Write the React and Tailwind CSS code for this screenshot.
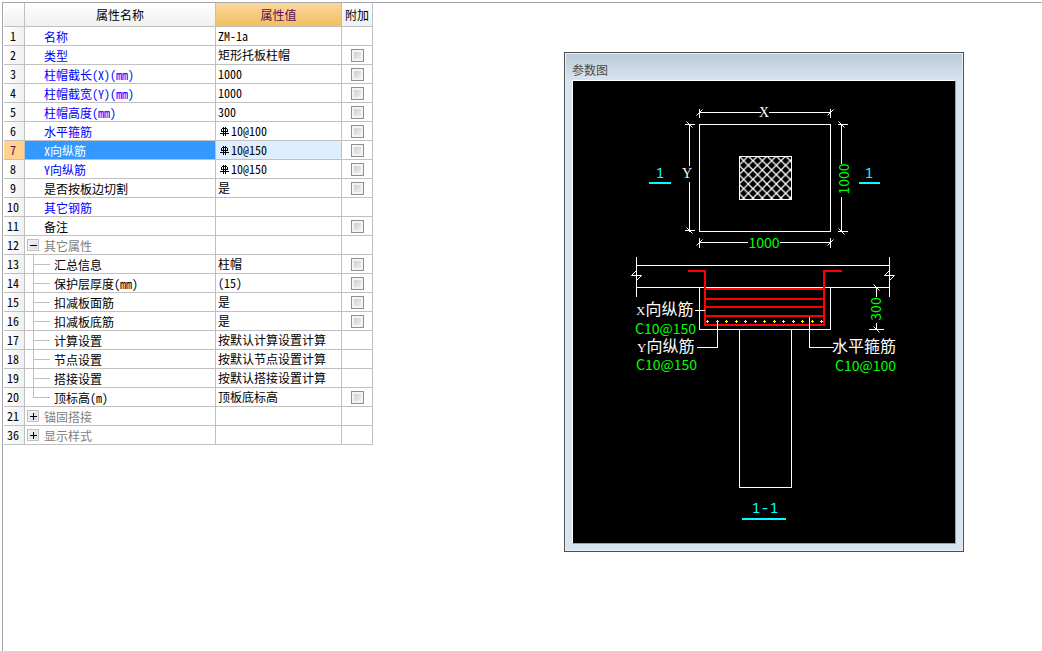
const ROWS = [
  { no: 1, name: "名称", value: "ZM-1a", tone: "key" },
  { no: 2, name: "类型", value: "矩形托板柱帽", tone: "key", check: true },
  { no: 3, name: "柱帽截长(X)(mm)", value: "1000", tone: "key", check: true },
  { no: 4, name: "柱帽截宽(Y)(mm)", value: "1000", tone: "key", check: true },
  { no: 5, name: "柱帽高度(mm)", value: "300", tone: "key", check: true },
  { no: 6, name: "水平箍筋", value: "10@100", rebar: true, tone: "key", check: true },
  { no: 7, name: "X向纵筋", value: "10@150", rebar: true, tone: "key", check: true, selected: true },
  { no: 8, name: "Y向纵筋", value: "10@150", rebar: true, tone: "key", check: true },
  { no: 9, name: "是否按板边切割", value: "是", check: true },
  { no: 10, name: "其它钢筋", value: "", tone: "key" },
  { no: 11, name: "备注", value: "", check: true },
  { no: 12, name: "其它属性", value: "", tone: "group", open: true },
  { no: 13, name: "汇总信息", value: "柱帽", child: true, check: true },
  { no: 14, name: "保护层厚度(mm)", value: "(15)", child: true, check: true },
  { no: 15, name: "扣减板面筋", value: "是", child: true, check: true },
  { no: 16, name: "扣减板底筋", value: "是", child: true, check: true },
  { no: 17, name: "计算设置", value: "按默认计算设置计算", child: true },
  { no: 18, name: "节点设置", value: "按默认节点设置计算", child: true },
  { no: 19, name: "搭接设置", value: "按默认搭接设置计算", child: true },
  { no: 20, name: "顶标高(m)", value: "顶板底标高", child: true, last: true, check: true },
  { no: 21, name: "锚固搭接", value: "", tone: "group", open: false },
  { no: 36, name: "显示样式", value: "", tone: "group", open: false },
];

const CELL = "border-r border-b border-[#c0c0c0] p-0 font-normal";

function nameColor(row) {
  if (row.selected) return "text-white";
  if (row.tone === "key") return "text-[#0000ff]";
  if (row.tone === "group") return "text-[#808080]";
  return "text-black";
}

function RebarSign() {
  return (
    <svg viewBox="0 0 9 9" className="mr-[2px] ml-[2px] size-[9px] shrink-0" fill="#000" shapeRendering="crispEdges">
      <path d="M2 1h5v1H2zM1 2h1v3H1zM7 2h1v3H7zM2 4h5v1H2zM0 6h9v1H0zM3 0h1v9H3zM5 0h1v9H5z" />
    </svg>
  );
}

function Expander({ open, label }) {
  return (
    <button
      type="button"
      aria-label={label}
      aria-expanded={open}
      className="mr-[5px] ml-[2px] size-3 border border-[#c0c0c0] bg-linear-to-br from-[#f4f4f4] to-[#d2d6de] shadow-[inset_0_0_0_1px_#f0f0f0]"
    >
      <svg viewBox="0 0 10 10" className="block size-[10px]" fill="#000" shapeRendering="crispEdges">
        <path d={open ? "M2 5h7v1H2z" : "M2 5h7v1H2zM5 2h1v7H5z"} />
      </svg>
    </button>
  );
}

function Branch({ last }) {
  return (
    <span className="mr-[4px] ml-2 flex h-[19px] w-[17px] flex-col">
      <span className="h-[10px] border-b border-l border-[#c0c0c0]" />
      {!last && <span className="h-[9px] border-l border-[#c0c0c0]" />}
    </span>
  );
}

function PropertyRow({ row }) {
  const isGroup = row.tone === "group";
  const nameId = `prop-${row.no}`;

  return (
    <tr>
      <th
        scope="row"
        className={`${CELL} text-center ${
          row.selected ? "bg-[#ffd38c] text-[#5a0a5a]" : "bg-linear-to-r from-white to-[#f0f0f0] text-black"
        }`}
      >
        <div className="h-[18px] pr-[2px] leading-[17px]">{row.no}</div>
      </th>
      <td className={`${CELL} ${row.selected ? "bg-[#3399ff]" : ""}`}>
        <div className={`flex h-[18px] items-center ${nameColor(row)}`}>
          {isGroup && <Expander open={row.open} label={row.name} />}
          {row.child && <Branch last={row.last} />}
          <span id={nameId} className={isGroup || row.child ? "pt-[2px]" : "pt-[2px] pl-[19px]"}>
            {row.name}
          </span>
        </div>
      </td>
      <td className={`${CELL} ${row.selected ? "bg-[#dfeeff]" : ""}`}>
        <div className="flex h-[18px] items-center pl-[2px]">
          {row.rebar && <RebarSign />}
          <span>{row.value}</span>
        </div>
      </td>
      <td className={CELL}>
        {row.check && (
          <input
            type="checkbox"
            aria-labelledby={nameId}
            className="mx-auto block size-[13px] appearance-none border border-[#8e8f8f] bg-linear-to-br from-[#c2c8d2] to-[#f6f6f6] shadow-[inset_0_0_0_2px_#f4f4f4] checked:from-[#3399ff]"
          />
        )}
      </td>
    </tr>
  );
}

function PropertyTable() {
  return (
    <table className="w-[369px] shrink-0 table-fixed border-separate border-spacing-0 self-start text-[12px] leading-[18px]">
      <colgroup>
        <col className="w-[21px]" />
        <col className="w-[191px]" />
        <col className="w-[126px]" />
        <col className="w-[31px]" />
      </colgroup>
      <thead>
        <tr className="h-6">
          <td className={`${CELL} bg-linear-to-b from-white to-[#f0f0f0]`} />
          <th className={`${CELL} bg-linear-to-b from-white to-[#f0f0f0]`}>属性名称</th>
          <th className={`${CELL} bg-linear-to-b from-[#fad79c] to-[#f2bf5d] text-[#5a0a5a]`}>属性值</th>
          <th className={`${CELL} bg-linear-to-b from-white to-[#f0f0f0]`}>附加</th>
        </tr>
      </thead>
      <tbody>
        {ROWS.map((row) => (
          <PropertyRow key={row.no} row={row} />
        ))}
      </tbody>
    </table>
  );
}

const DOTS = Array.from({ length: 13 }, (_, i) => Math.round(134 + i * 9.5));

function SectionDrawing() {
  return (
    <svg viewBox="0 0 382 462" className="block w-full bg-black">
      <defs>
        <pattern id="hatch" x="166" y="75" width="9.33" height="9.33" patternUnits="userSpaceOnUse">
          <path d="M0 0l9.33 9.33M9.33 0L0 9.33" stroke="#fff" strokeWidth="1.3" />
        </pattern>
      </defs>

      {/* Plan view */}
      <g fill="none" stroke="#fff" shapeRendering="crispEdges" transform="translate(0.5 0.5)">
        <rect x="126" y="43" width="131" height="107" />
        <path d="M126 31H187M195 31H257M126 27v9M257 27v9" />
        <path d="M126 161H174M206 161H257M126 156v10M257 156v10" />
        <path d="M116 43V84M116 100V150M111 43h10M111 149h10" />
        <path d="M268 43V82M268 115V150M264 43h10M264 150h10" />
      </g>
      <rect x="166.5" y="75.5" width="52" height="43" fill="url(#hatch)" stroke="#fff" />
      <g fill="none" stroke="#fff" transform="translate(0.5 0.5)">
        <path d="M123 34l6-6M254 34l6-6M123 164l6-6M254 164l6-6" />
        <path d="M113 40l6 6M113 146l6 6M265 40l6 6M265 147l6 6" />
      </g>

      {/* Slab, cap and column */}
      <g fill="none" stroke="#fff" shapeRendering="crispEdges" transform="translate(0.5 0.5)">
        <path d="M63 184H316M63 206H316M63 175V215M316 175V215" />
        <path d="M126 206V248H257V206" />
        <path d="M166 248V406H218V248" />
        <path d="M303 206V215M303 241V248M295 248h15" />
      </g>
      <g fill="none" stroke="#fff" transform="translate(0.5 0.5)">
        <path d="M63 189l-5 5h10l-5 5M316 189l-5 5h10l-5 5" />
        <path d="M300 203l6 6M300 245l6 6" />
      </g>

      {/* Reinforcement */}
      <g fill="none" stroke="#f00" strokeWidth="2" shapeRendering="crispEdges">
        <path d="M115 190H132V244H251V190H269" />
        <path d="M132 208H251M132 218H251M132 226H251M132 235H251" />
      </g>
      <g fill="#ff0" shapeRendering="crispEdges">
        {DOTS.map((x) => (
          <path key={x} d={`M${x - 1} 240h3v1h-3zM${x} 239h1v3h-1z`} />
        ))}
      </g>
      <g fill="none" stroke="#fff" shapeRendering="crispEdges" transform="translate(0.5 0.5)">
        <path d="M121 229H131M123 266H144V240M236 235V266H260" />
      </g>

      {/* Section marks */}
      <g fill="#0ff">
        <rect x="76" y="101" width="22" height="2" />
        <rect x="286" y="101" width="21" height="2" />
        <rect x="169" y="437" width="44" height="2" />
      </g>
      <g fill="#0ff" textAnchor="middle" className="font-['Noto_Sans_Mono','Noto_Sans_CJK_SC',monospace] text-[15px]">
        <text x="87" y="97">1</text>
        <text x="296" y="97">1</text>
        <text x="192" y="432">1-1</text>
      </g>

      <g fill="#fff" className="font-['Liberation_Serif','Noto_Sans_CJK_SC',serif] text-[16px]">
        <text x="191" y="36" textAnchor="middle" className="text-[14px]">X</text>
        <text x="114" y="97" textAnchor="middle" className="text-[14px]">Y</text>
        <text x="63" y="234"><tspan className="text-[13px]">X</tspan>向纵筋</text>
        <text x="64" y="271"><tspan className="text-[13px]">Y</tspan>向纵筋</text>
        <text x="259" y="271">水平箍筋</text>
      </g>
      <g fill="#0f0" className="font-['Noto_Sans_CJK_SC',sans-serif] text-[14px]">
        <text x="191" y="167" textAnchor="middle">1000</text>
        <text x="276" y="98" textAnchor="middle" transform="rotate(-90 276 98)">1000</text>
        <text x="308" y="228" textAnchor="middle" transform="rotate(-90 308 228)">300</text>
        <text x="62" y="253">C10@150</text>
        <text x="63" y="289">C10@150</text>
        <text x="262" y="290">C10@100</text>
      </g>
    </svg>
  );
}

function ParameterWindow() {
  return (
    <section className="w-full max-w-[400px] self-start border border-[#4b4e53] bg-[#d7e3f0]">
      <div className="border border-[#e9eff7] bg-linear-to-b from-[#bccad9] to-[#d7e3f0] to-[26px] px-[6px] pb-[6px]">
        <h2 className="pt-[6px] text-[12px] leading-5 text-[#4a4a4a]">参数图</h2>
        <div className="border border-t-white border-r-[#a0a0a0] border-b-[#a0a0a0] border-l-white">
          <SectionDrawing />
        </div>
      </div>
    </section>
  );
}

export default function App() {
  return (
    <div className="flex min-h-screen bg-white pt-[2px] pl-[2px] font-['Noto_Sans_Mono_CJK_SC','Noto_Sans_CJK_SC',monospace] text-black">
      <main className="flex flex-1 border-t border-l border-[#a5a5ad] pl-px">
        <PropertyTable />
        <div className="flex flex-1 justify-end pt-[49px] pr-[78px] pl-4">
          <ParameterWindow />
        </div>
      </main>
    </div>
  );
}
